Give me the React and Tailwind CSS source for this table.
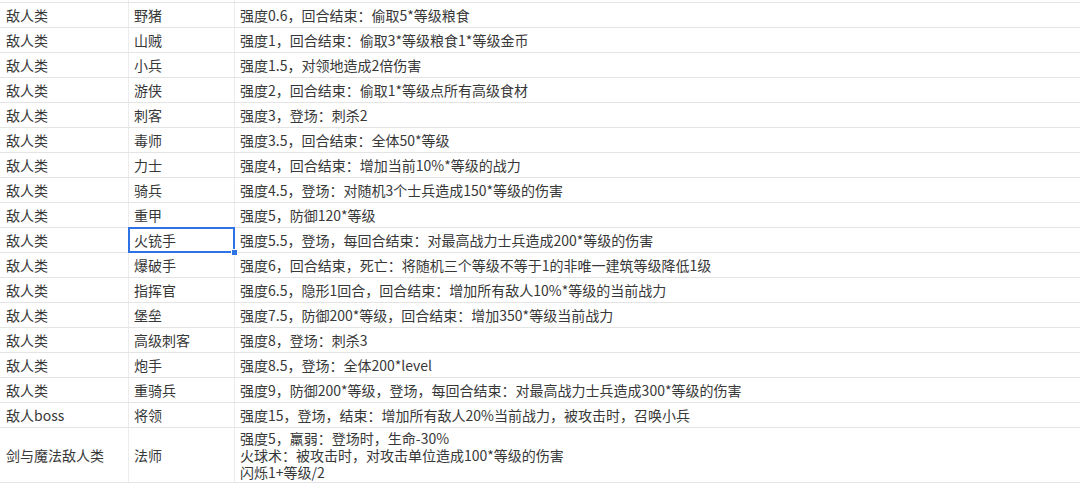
import React from 'react';

const rows = [
  ['敌人类', '野猪', ['强度0.6，回合结束：偷取5*等级粮食']],
  ['敌人类', '山贼', ['强度1，回合结束：偷取3*等级粮食1*等级金币']],
  ['敌人类', '小兵', ['强度1.5，对领地造成2倍伤害']],
  ['敌人类', '游侠', ['强度2，回合结束：偷取1*等级点所有高级食材']],
  ['敌人类', '刺客', ['强度3，登场：刺杀2']],
  ['敌人类', '毒师', ['强度3.5，回合结束：全体50*等级']],
  ['敌人类', '力士', ['强度4，回合结束：增加当前10%*等级的战力']],
  ['敌人类', '骑兵', ['强度4.5，登场：对随机3个士兵造成150*等级的伤害']],
  ['敌人类', '重甲', ['强度5，防御120*等级']],
  ['敌人类', '火铳手', ['强度5.5，登场，每回合结束：对最高战力士兵造成200*等级的伤害'], true],
  ['敌人类', '爆破手', ['强度6，回合结束，死亡：将随机三个等级不等于1的非唯一建筑等级降低1级']],
  ['敌人类', '指挥官', ['强度6.5，隐形1回合，回合结束：增加所有敌人10%*等级的当前战力']],
  ['敌人类', '堡垒', ['强度7.5，防御200*等级，回合结束：增加350*等级当前战力']],
  ['敌人类', '高级刺客', ['强度8，登场：刺杀3']],
  ['敌人类', '炮手', ['强度8.5，登场：全体200*level']],
  ['敌人类', '重骑兵', ['强度9，防御200*等级，登场，每回合结束：对最高战力士兵造成300*等级的伤害']],
  ['敌人boss', '将领', ['强度15，登场，结束：增加所有敌人20%当前战力，被攻击时，召唤小兵']],
  ['剑与魔法敌人类', '法师', ['强度5，羸弱：登场时，生命-30%', '火球术：被攻击时，对攻击单位造成100*等级的伤害', '闪烁1+等级/2']],
];

export default function App() {
  return (
    <div
      className="w-[1080px] h-[485px] overflow-hidden bg-white text-[#383838] text-[14px]"
      style={{ fontFamily: '"Microsoft YaHei", "Noto Sans CJK SC", "Noto Sans", sans-serif' }}
    >
      <div className="h-[3px] border-b border-[#e4e4e4] grid grid-cols-[129px_106px_1fr]">
        <div className="border-r border-[#ececec]" />
        <div className="border-r border-[#ececec]" />
        <div />
      </div>
      {rows.map(([a, b, lines, selected], i) => (
        <div
          key={i}
          className={`grid grid-cols-[129px_106px_1fr] border-b border-[#e4e4e4] ${lines.length > 1 ? 'h-[55px]' : 'h-[25px]'}`}
        >
          <div className="border-r border-[#ececec] pl-[6px] flex items-center whitespace-nowrap">{a}</div>
          <div className="relative border-r border-[#ececec] pl-[5px] flex items-center whitespace-nowrap">
            {b}
            {selected && (
              <>
                <div className="absolute left-[-1px] top-[-1px] right-[-1px] bottom-[-1px] border-2 border-[#2f72e4]" />
                <div className="absolute z-10 right-[-4px] bottom-[-4px] w-[7px] h-[7px] bg-[#2f72e4] border border-white" />
              </>
            )}
          </div>
          <div className="pl-[5px] flex flex-col justify-center whitespace-nowrap leading-[17px]">
            {lines.map((l, j) => (
              <div key={j}>{l}</div>
            ))}
          </div>
        </div>
      ))}
    </div>
  );
}
